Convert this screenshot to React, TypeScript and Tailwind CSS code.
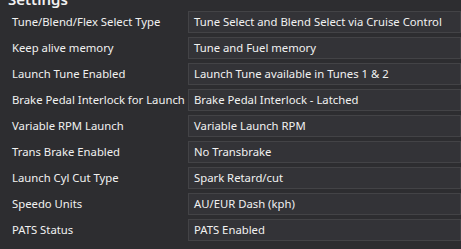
const rows: [string, string][] = [
  ["Tune/Blend/Flex Select Type", "Tune Select and Blend Select via Cruise Control"],
  ["Keep alive memory", "Tune and Fuel memory"],
  ["Launch Tune Enabled", "Launch Tune available in Tunes 1 & 2"],
  ["Brake Pedal Interlock for Launch", "Brake Pedal Interlock - Latched"],
  ["Variable RPM Launch", "Variable Launch RPM"],
  ["Trans Brake Enabled", "No Transbrake"],
  ["Launch Cyl Cut Type", "Spark Retard/cut"],
  ["Speedo Units", "AU/EUR Dash (kph)"],
  ["PATS Status", "PATS Enabled"],
]

export default function App() {
  return (
    <div className="w-[461px] h-[249px] overflow-hidden bg-[#2d2d30] text-[#f1f1f1] font-['Noto_Sans',sans-serif]">
      <div className="-mt-[11px] pl-[8px] text-[15px] font-semibold leading-[20px]">Settings</div>
      <div className="flex flex-col gap-[4px] mt-[2px] pl-[12px]">
        {rows.map(([label, value]) => (
          <div key={label} className="flex items-center h-[22px]">
            <div className="w-[176px] shrink-0 text-[11.3px] whitespace-nowrap">{label}</div>
            <div className="flex-1 h-[22px] flex items-center pl-[5px] bg-[#333337] border border-[#434346] text-[11.3px] whitespace-nowrap">
              {value}
            </div>
          </div>
        ))}
      </div>
    </div>
  )
}
